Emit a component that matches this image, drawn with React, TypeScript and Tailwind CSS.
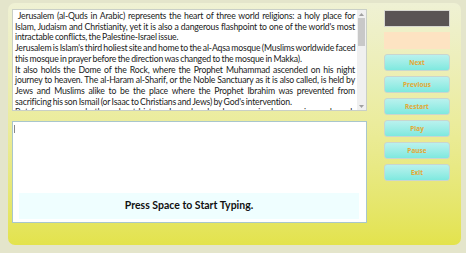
import React from "react";

const lines: { t: string; j: boolean }[] = [
  { t: "\u00a0Jerusalem (al-Quds in Arabic) represents the heart of three world religions: a holy place for", j: true },
  { t: "Islam, Judaism and Christianity, yet it is also a dangerous flashpoint to one of the world's most", j: true },
  { t: "intractable conflicts, the Palestine-Israel issue.", j: false },
  { t: "Jerusalem is Islam's third holiest site and home to the al-Aqsa mosque (Muslims worldwide faced", j: true },
  { t: "this mosque in prayer before the direction was changed to the mosque in Makka).", j: false },
  { t: "It also holds the Dome of the Rock, where the Prophet Muhammad ascended on his night", j: true },
  { t: "journey to heaven. The al-Haram al-Sharif, or the Noble Sanctuary as it is also called, is held by", j: true },
  { t: "Jews and Muslims alike to be the place where the Prophet Ibrahim was prevented from", j: true },
  { t: "sacrificing his son Ismail (or Isaac to Christians and Jews) by God's intervention.", j: false },
  { t: "But for many people throughout history, Jerusalem has been a prized possession and much", j: true },
];

const buttons = ["Next", "Previous", "Restart", "Play", "Pause", "Exit"];

export default function App() {
  return (
    <div className="w-[466px] h-[253px] bg-[#e4e5cb] pt-[3px] pl-[8px] overflow-hidden">
      <div className="w-[453px] h-[242px] rounded-[7px] bg-gradient-to-b from-[#eff1d4] via-[#ebec9c] to-[#e3e34c] flex">
        <div className="pl-[4px] pt-[6px] w-[359px] flex flex-col">
          <div className="h-[102px] border border-[#c9cfc7] bg-white flex overflow-hidden">
            <div className="flex-1 pl-[2px] pr-[2px] pt-[1px] overflow-hidden font-['Lato',sans-serif] text-[8.7px] leading-[10.7px] tracking-[-0.18px] [word-spacing:-0.6px] text-[#1a1a1a]">
              {lines.map((l, i) => (
                <div
                  key={i}
                  className={l.j ? "text-justify [text-align-last:justify] whitespace-nowrap" : "text-left whitespace-nowrap"}
                >
                  {l.t}
                </div>
              ))}
            </div>
            <div className="w-[9px] bg-[#f0f0f0] flex flex-col items-center">
              <div className="h-[8px] flex items-center justify-center">
                <svg width="5" height="3" viewBox="0 0 5 3"><path d="M0 3 L2.5 0 L5 3 Z" fill="#a0a0a0" /></svg>
              </div>
              <div className="w-[7px] h-[28px] bg-[#c8c8c8]"></div>
              <div className="flex-1"></div>
              <div className="h-[8px] flex items-center justify-center">
                <svg width="5" height="3" viewBox="0 0 5 3"><path d="M0 0 L2.5 3 L5 0 Z" fill="#a0a0a0" /></svg>
              </div>
            </div>
          </div>
          <div className="mt-[10px] h-[102px] border border-[#a9c6cc] bg-white flex flex-col pl-[6px] pr-[7px] pb-[3px]">
            <div className="h-[8px] w-px bg-[#888] ml-[-5px] mt-[3px]"></div>
            <div className="flex-1"></div>
            <div className="h-[26px] bg-[#effeff] flex items-center justify-center font-['Lato',sans-serif] text-[10.5px] font-bold text-[#111]">
              Press Space to Start Typing.
            </div>
          </div>
        </div>
        <div className="ml-[17px] pt-[7px] w-[66px] flex flex-col">
          <div className="h-[17px] bg-[#5a5454] border border-[#d8d8d0]"></div>
          <div className="mt-[5px] h-[17px] bg-[#fde3c2]"></div>
          {buttons.map((b) => (
            <div
              key={b}
              className="mt-[5px] h-[17px] rounded-[3px] border border-[#c9d6cf] bg-gradient-to-b from-[#b9f1ee] to-[#7ee9df] flex items-center justify-center font-['Open_Sans',sans-serif] text-[6.5px] font-bold text-[#e4a834]"
            >
              {b}
            </div>
          ))}
        </div>
      </div>
    </div>
  );
}
